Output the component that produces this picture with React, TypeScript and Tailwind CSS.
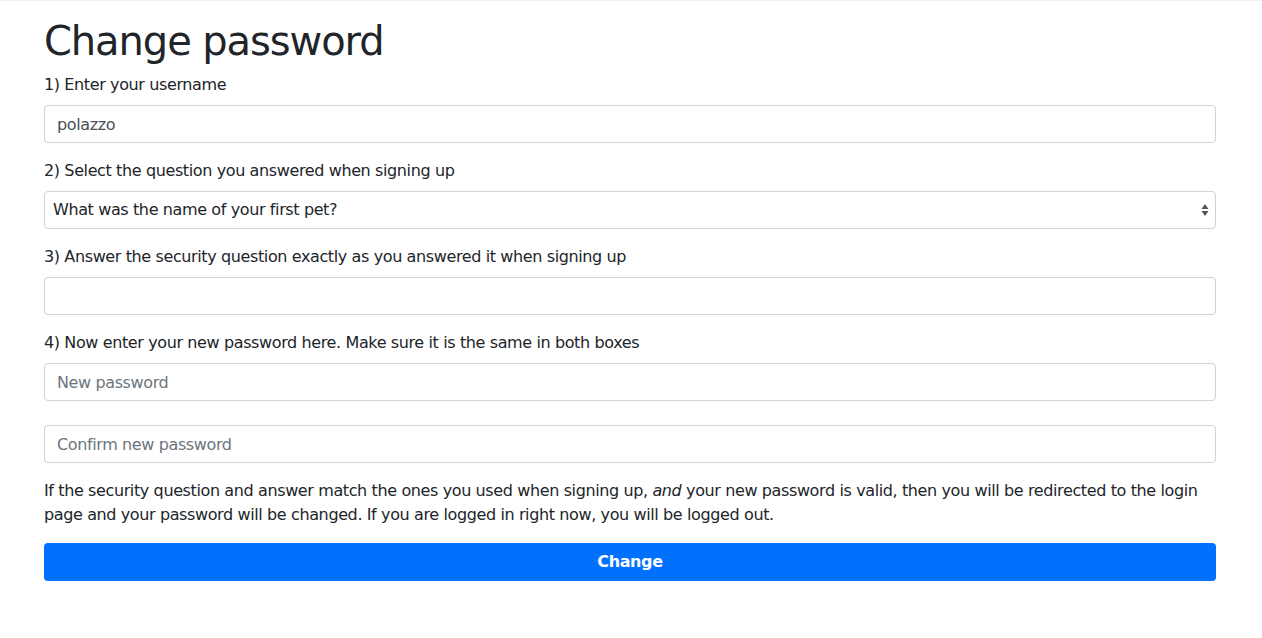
import React from "react";

export default function App() {
  return (
    <div className="min-h-[638px] bg-white border-t border-[#f0f0f0] text-[#212529] text-[16px] leading-[24px] tracking-[-0.024em] font-['DejaVu_Sans',sans-serif]">
      <div className="pl-[44px] pr-[46px] pt-[16px]">
        <h1 className="text-[40px] leading-[48px] font-normal mb-[8px] tracking-[-0.027em]">Change password</h1>
        <div className="mb-[16px]">
          <label className="block mb-[8px]">1) Enter your username</label>
          <input
            defaultValue="polazzo"
            className="block w-full h-[38px] px-[12px] border border-[#ced4da] rounded-[4px] text-[#495057] outline-none"
          />
        </div>
        <div className="mb-[16px]">
          <label className="block mb-[8px]">2) Select the question you answered when signing up</label>
          <div className="relative h-[38px] border border-[#ced4da] rounded-[4px] flex items-center px-[8px] text-[#212529]">
            <span>What was the name of your first pet?</span>
            <svg className="absolute right-[6px] top-1/2 -translate-y-1/2" width="8" height="14" viewBox="0 0 8 14">
              <path d="M4 1 L7.5 6 H0.5 Z" fill="#555" />
              <path d="M4 13 L7.5 8 H0.5 Z" fill="#555" />
            </svg>
          </div>
        </div>
        <div className="mb-[16px]">
          <label className="block mb-[8px]">3) Answer the security question exactly as you answered it when signing up</label>
          <input className="block w-full h-[38px] px-[12px] border border-[#ced4da] rounded-[4px] outline-none" />
        </div>
        <div className="mb-[24px]">
          <label className="block mb-[8px]">4) Now enter your new password here. Make sure it is the same in both boxes</label>
          <input
            placeholder="New password"
            className="block w-full h-[38px] px-[12px] border border-[#ced4da] rounded-[4px] outline-none tracking-[-0.024em] placeholder:text-[#6c757d]"
          />
        </div>
        <div className="mb-[16px]">
          <input
            placeholder="Confirm new password"
            className="block w-full h-[38px] px-[12px] border border-[#ced4da] rounded-[4px] outline-none tracking-[-0.024em] placeholder:text-[#6c757d]"
          />
        </div>
        <p className="mb-[16px]">
          If the security question and answer match the ones you used when signing up, <em>and</em> your new password is valid, then you will be redirected to the login page and your password will be changed. If you are logged in right now, you will be logged out.
        </p>
        <button className="block w-full h-[38px] rounded-[4px] bg-[#0070fe] text-white font-bold tracking-[-0.024em]">
          Change
        </button>
      </div>
    </div>
  );
}
